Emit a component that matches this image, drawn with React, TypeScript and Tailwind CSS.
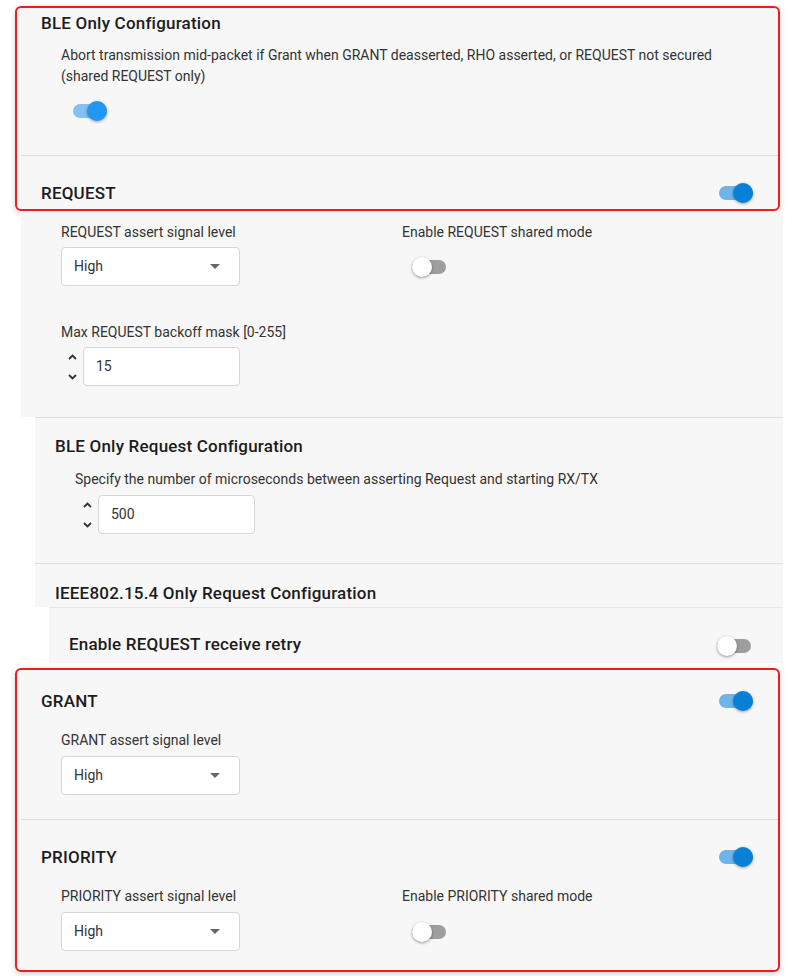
import React from 'react';

const font = { fontFamily: 'Roboto, "Noto Sans", Arial, sans-serif' };

const Toggle: React.FC<{ on?: boolean; light?: boolean }> = ({ on, light }) => {
  if (on) {
    return (
      <div className="relative h-[20px] w-[34px] shrink-0">
        <div
          className={`absolute left-0 top-[3px] h-[14px] w-[34px] rounded-full ${
            light ? 'bg-[#86c1f2]' : 'bg-[#6fb5ea]'
          }`}
        />
        <div
          className={`absolute right-0 top-0 h-[20px] w-[20px] rounded-full shadow-[0_1px_3px_rgba(0,0,0,0.35)] ${
            light ? 'bg-[#2196f3]' : 'bg-[#0780d8]'
          }`}
        />
      </div>
    );
  }
  return (
    <div className="relative h-[20px] w-[34px] shrink-0">
      <div className="absolute left-0 top-[3px] h-[14px] w-[34px] rounded-full bg-[#9e9e9e]" />
      <div className="absolute left-0 top-0 h-[20px] w-[20px] rounded-full bg-white shadow-[0_1px_3px_rgba(0,0,0,0.4)]" />
    </div>
  );
};

const Select: React.FC = () => (
  <div className="flex h-[39px] w-[179px] items-center justify-between rounded-[4px] border border-[#d6d6d6] bg-white pl-[12px] pr-[19px] text-[14px] text-[#333]">
    <span>High</span>
    <svg width="10" height="5" viewBox="0 0 10 5">
      <path d="M0 0h10L5 5z" fill="#666" />
    </svg>
  </div>
);

const NumberField: React.FC<{ value: string }> = ({ value }) => (
  <div className="flex items-center gap-[5px]">
    <div className="flex w-[12px] flex-col items-center gap-[14px] pt-[1px]">
      <svg width="9" height="6" viewBox="0 0 9 6">
        <path d="M1 5L4.5 1.5 8 5" stroke="#333" strokeWidth="1.8" fill="none" />
      </svg>
      <svg width="9" height="6" viewBox="0 0 9 6">
        <path d="M1 1l3.5 3.5L8 1" stroke="#333" strokeWidth="1.8" fill="none" />
      </svg>
    </div>
    <div className="flex h-[39px] w-[157px] items-center rounded-[4px] border border-[#d6d6d6] bg-white pl-[12px] text-[14px] text-[#333]">
      {value}
    </div>
  </div>
);

const Title: React.FC<{ children: React.ReactNode }> = ({ children }) => (
  <div className="text-[17px] font-medium leading-[24px] tracking-[0.2px] text-[#1c1c1c]">{children}</div>
);

const Label: React.FC<{ children: React.ReactNode }> = ({ children }) => (
  <div className="text-[14px] leading-[20px] text-[#333]">{children}</div>
);

export default function App() {
  return (
    <div className="h-[976px] w-[800px] overflow-hidden bg-white" style={font}>
      {/* BLE only + REQUEST header */}
      <div className="ml-[15px] mt-[6px] h-[205px] w-[765px] rounded-[6px] border-2 border-[#ee1c1c] bg-[#f7f7f7] shadow-[0_2px_6px_rgba(0,0,0,0.18)]">
        <div className="pl-[24px] pt-[3px]">
          <Title>BLE Only Configuration</Title>
        </div>
        <div className="pl-[44px] pt-[10px] text-[14px] leading-[21px] text-[#333]">
          Abort transmission mid-packet if Grant when GRANT deasserted, RHO asserted, or REQUEST not secured
          <br />
          (shared REQUEST only)
        </div>
        <div className="pl-[56px] pt-[14px]">
          <Toggle on light />
        </div>
        <div className="ml-[4px] mt-[34px] h-px bg-[#dedede]" />
        <div className="flex items-center justify-between pl-[24px] pr-[25px] pt-[25px]">
          <Title>REQUEST</Title>
          <Toggle on />
        </div>
      </div>

      {/* REQUEST body */}
      <div className="ml-[21px] h-[206px] w-[762px] bg-[#f7f7f7] pl-[40px] pt-[11px]">
        <div className="flex">
          <div className="w-[341px]">
            <Label>REQUEST assert signal level</Label>
            <div className="mt-[5px]">
              <Select />
            </div>
          </div>
          <div>
            <Label>Enable REQUEST shared mode</Label>
            <div className="ml-[10px] mt-[15px]">
              <Toggle />
            </div>
          </div>
        </div>
        <div className="mt-[36px]">
          <Label>Max REQUEST backoff mask [0-255]</Label>
          <div className="ml-[5px] mt-[5px]">
            <NumberField value="15" />
          </div>
        </div>
      </div>

      {/* BLE Only Request Configuration */}
      <div className="ml-[35px] h-[190px] w-[748px] border-t border-[#dedede] bg-[#f7f7f7]">
        <div className="pl-[20px] pt-[16px]">
          <Title>BLE Only Request Configuration</Title>
        </div>
        <div className="pl-[40px] pt-[11px]">
          <Label>Specify the number of microseconds between asserting Request and starting RX/TX</Label>
          <div className="ml-[6px] mt-[6px]">
            <NumberField value="500" />
          </div>
        </div>
        <div className="mt-[29px] h-px bg-[#dedede]" />
        <div className="pl-[20px] pt-[17px]">
          <Title>IEEE802.15.4 Only Request Configuration</Title>
        </div>
      </div>

      {/* receive retry */}
      <div className="ml-[49px] flex h-[56px] w-[734px] items-end justify-between border-t border-[#e6e6e6] bg-[#f7f7f7] pb-[7px] pl-[20px] pr-[32px]">
        <Title>Enable REQUEST receive retry</Title>
        <Toggle />
      </div>

      {/* GRANT + PRIORITY */}
      <div className="ml-[15px] mt-[5px] h-[304px] w-[765px] rounded-[6px] border-2 border-[#ee1c1c] bg-[#f7f7f7] shadow-[0_2px_6px_rgba(0,0,0,0.18)]">
        <div className="flex items-center justify-between pl-[24px] pr-[25px] pt-[19px]">
          <Title>GRANT</Title>
          <Toggle on />
        </div>
        <div className="pl-[44px] pt-[17px]">
          <Label>GRANT assert signal level</Label>
          <div className="mt-[6px]">
            <Select />
          </div>
        </div>
        <div className="ml-[4px] mt-[24px] h-px bg-[#dedede]" />
        <div className="flex items-center justify-between pl-[24px] pr-[25px] pt-[25px]">
          <Title>PRIORITY</Title>
          <Toggle on />
        </div>
        <div className="flex pl-[44px] pt-[17px]">
          <div className="w-[341px]">
            <Label>PRIORITY assert signal level</Label>
            <div className="mt-[6px]">
              <Select />
            </div>
          </div>
          <div>
            <Label>Enable PRIORITY shared mode</Label>
            <div className="ml-[10px] mt-[16px]">
              <Toggle />
            </div>
          </div>
        </div>
      </div>
    </div>
  );
}
